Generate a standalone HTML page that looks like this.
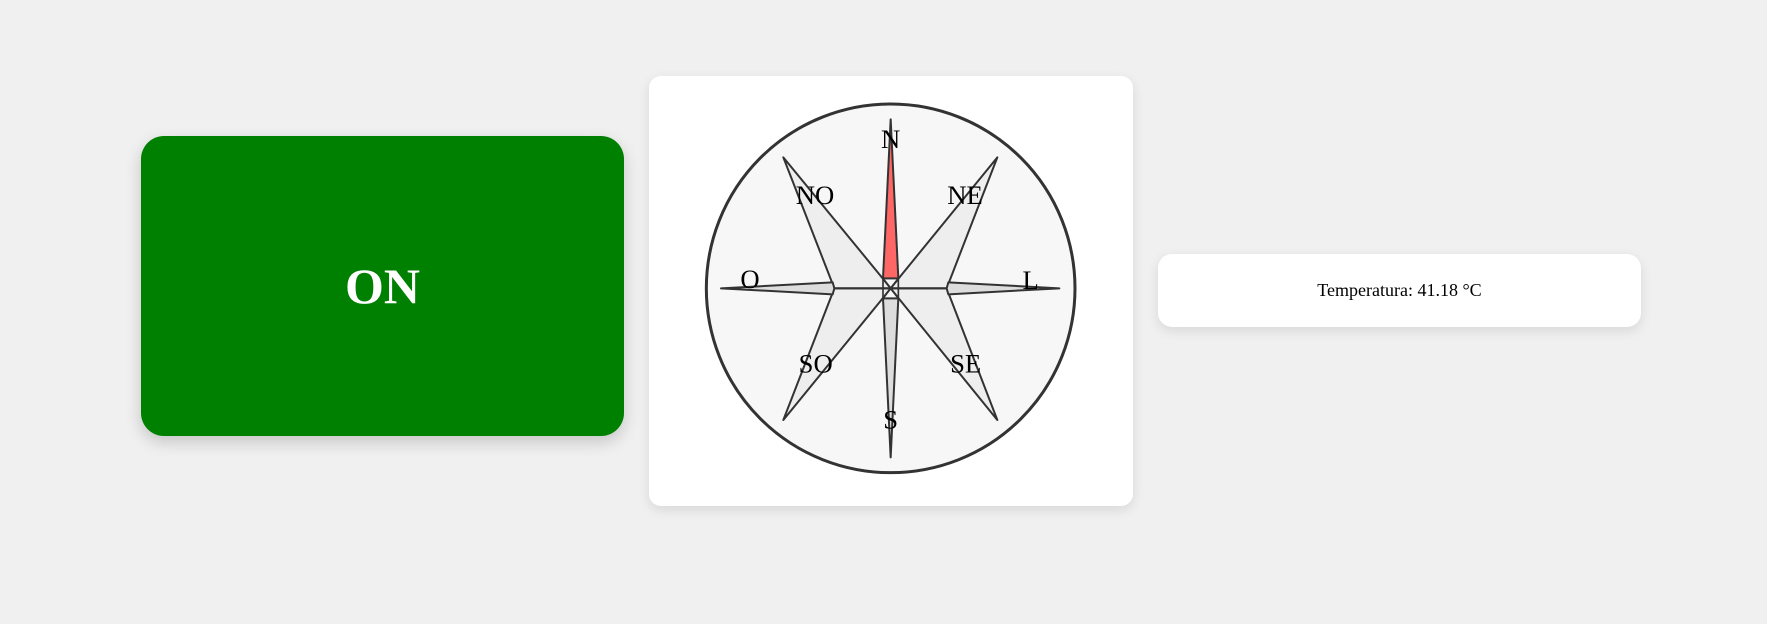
<!DOCTYPE html>
<html><head><meta charset="utf-8"><style>
html,body{margin:0;padding:0;width:1767px;height:624px;background:#f0f0f0;overflow:hidden;font-family:"Liberation Serif",serif;}
.on{position:absolute;left:141px;top:136px;width:483px;height:300px;background:#008000;border-radius:23px;box-shadow:0 6px 16px rgba(0,0,0,0.18);display:flex;align-items:center;justify-content:center;}
.on span{font-weight:bold;font-size:50px;color:#fff;line-height:1;}
.comp{position:absolute;left:649px;top:76px;width:484px;height:430px;background:#fff;border-radius:12px;box-shadow:0 4px 12px rgba(0,0,0,0.1);}
.temp{position:absolute;left:1158px;top:254px;width:483px;height:73px;background:#fff;border-radius:14px;box-shadow:0 4px 12px rgba(0,0,0,0.1);text-align:center;line-height:73px;font-size:18px;color:#000;}
svg{position:absolute;left:640px;top:70px;}
</style></head><body>
<div class="on"><span>ON</span></div>
<div class="comp"></div>
<svg width="500" height="450" viewBox="0 0 1500 1350">
<circle cx="752" cy="655" r="553" fill="#f7f7f7" stroke="#333" stroke-width="9"/>
<g stroke="#333" stroke-width="6" stroke-linejoin="round">
<polygon points="430,262 728,625 752,655 583,655" fill="#eee"/>
<polygon points="1072,262 776,625 752,655 920,655" fill="#eee"/>
<polygon points="430,1050 728,685 752,655 583,655" fill="#eee"/>
<polygon points="1072,1050 776,685 752,655 920,655" fill="#eee"/>
<polygon points="243,655 578,637 583,655 578,673" fill="#ddd"/>
<polygon points="1258,655 925,637 920,655 925,673" fill="#ddd"/>
<line x1="583" y1="655" x2="920" y2="655"/>
<polygon points="752,148 775,625 729,625" fill="#ff6666"/>
<polygon points="752,1162 775,685 729,685" fill="#ddd"/>
<polygon points="729,625 775,625 775,685 729,685" fill="none" stroke-width="5"/>
<line x1="729" y1="625" x2="775" y2="685" stroke-width="5"/>
<line x1="775" y1="625" x2="729" y2="685" stroke-width="5"/>
</g>
<g font-family="Liberation Serif, serif" font-size="80" text-anchor="middle" fill="#000">
<text x="752" y="234">N</text>
<text x="525" y="402">NO</text>
<text x="975" y="402">NE</text>
<text x="330" y="654">O</text>
<text x="1172" y="657">L</text>
<text x="527" y="907">SO</text>
<text x="977" y="907">SE</text>
<text x="752" y="1075">S</text>
</g>
</svg>
<div class="temp">Temperatura: 41.18 °C</div>
</body></html>
